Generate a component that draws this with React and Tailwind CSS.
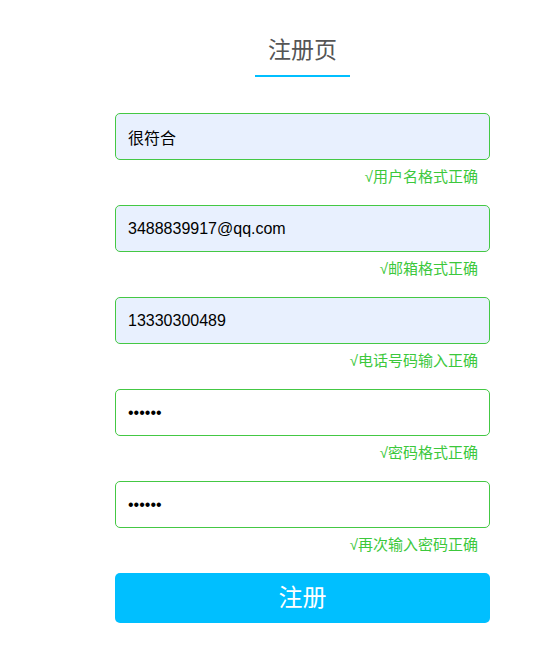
import React from "react";

const fields = [
  { value: "很符合", type: "text", filled: true, msg: "√用户名格式正确" },
  { value: "3488839917@qq.com", type: "text", filled: true, msg: "√邮箱格式正确" },
  { value: "13330300489", type: "text", filled: true, msg: "√电话号码输入正确" },
  { value: "123456", type: "password", filled: false, msg: "√密码格式正确" },
  { value: "123456", type: "password", filled: false, msg: "√再次输入密码正确" },
];

const filledBox = "h-[47px] w-full rounded-[5px] border border-[#44c844] bg-[#e8f0fe] flex items-center";
const plainBox = "h-[47px] w-full rounded-[5px] border border-[#44c844] bg-white flex items-center";

export default function App() {
  return (
    <div
      className="w-[557px] h-[665px] bg-white pt-[35px]"
      style={{ fontFamily: '"Liberation Sans", Arial, "Noto Sans CJK SC", sans-serif' }}
    >
      <div className="ml-[115px] w-[375px] flex flex-col">
        <div className="flex justify-center">
          <span className="text-[23px] leading-[30px] text-[#555] px-[13px] pb-[10px] border-b-2 border-[#00bfff]">
            注册页
          </span>
        </div>
        <div className="mt-[36px] flex flex-col">
          {fields.map((f, i) => (
            <div key={i} className="flex flex-col mb-[18px]">
              <div className={f.filled ? filledBox : plainBox}>
                <input
                  readOnly
                  type={f.type}
                  value={f.value}
                  className="h-full w-full bg-transparent px-[12px] text-[16px] text-black outline-none"
                  style={{ fontFamily: '"Liberation Sans", Arial, "Noto Sans CJK SC", sans-serif' }}
                />
              </div>
              <div className="mt-[7px] h-[20px] leading-[20px] text-[15px] text-[#3cc83c] text-right pr-[12px]">
                {f.msg}
              </div>
            </div>
          ))}
          <button className="h-[50px] w-full rounded-[5px] bg-[#00bfff] text-white text-[24px] leading-[50px]">
            注册
          </button>
        </div>
      </div>
    </div>
  );
}
